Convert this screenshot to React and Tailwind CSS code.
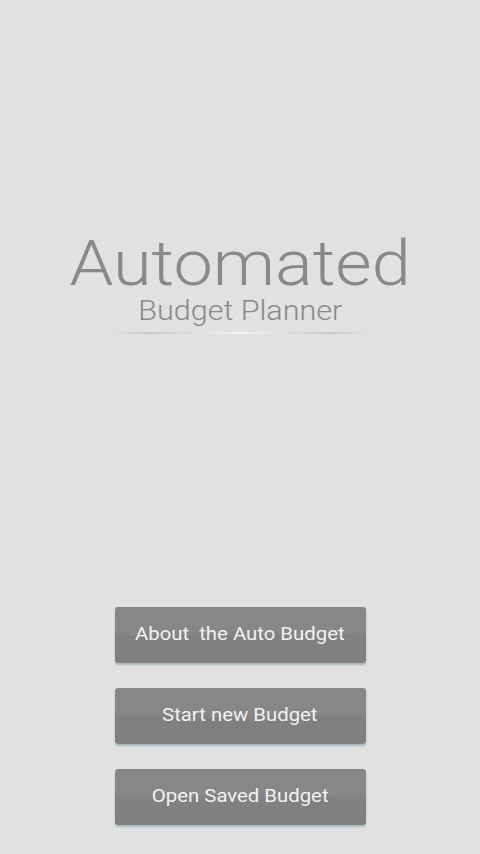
export default function App() {
  const buttons = ["About\u00a0 the Auto Budget", "Start new Budget", "Open Saved Budget"];
  return (
    <div className="w-[480px] h-[854px] bg-[#e1e1e1] flex flex-col items-center overflow-hidden" style={{ fontFamily: "Roboto, 'Open Sans', sans-serif" }}>
      <div className="mt-[228px] flex flex-col items-center">
        <div className="text-[63px] leading-[71px] font-light text-[#898989] scale-x-[1.115] whitespace-nowrap">Automated</div>
        <div className="text-[27px] leading-[24px] font-light text-[#898989] scale-x-[1.13] whitespace-nowrap">Budget Planner</div>
        <div className="mt-[9px] w-[260px] h-[2px] bg-[linear-gradient(to_right,rgba(200,200,200,0),#c8c8c8_15%,#f4f4f4_50%,#c8c8c8_85%,rgba(200,200,200,0))]"></div>
      </div>
      <div className="mt-[273px] flex flex-col gap-[25px]">
        {buttons.map((b) => (
          <div key={b} className="w-[251px] h-[56px] pb-[3px] rounded-[3px] bg-[linear-gradient(to_bottom,#878787_0%,#878787_48%,#808080_52%,#808080_100%)] shadow-[0_2px_2px_rgba(120,150,160,0.55)] flex items-center justify-center text-[18px] text-[#f2f2f2]">
            <span className="inline-block scale-x-[1.13] whitespace-nowrap">{b}</span>
          </div>
        ))}
      </div>
    </div>
  );
}
